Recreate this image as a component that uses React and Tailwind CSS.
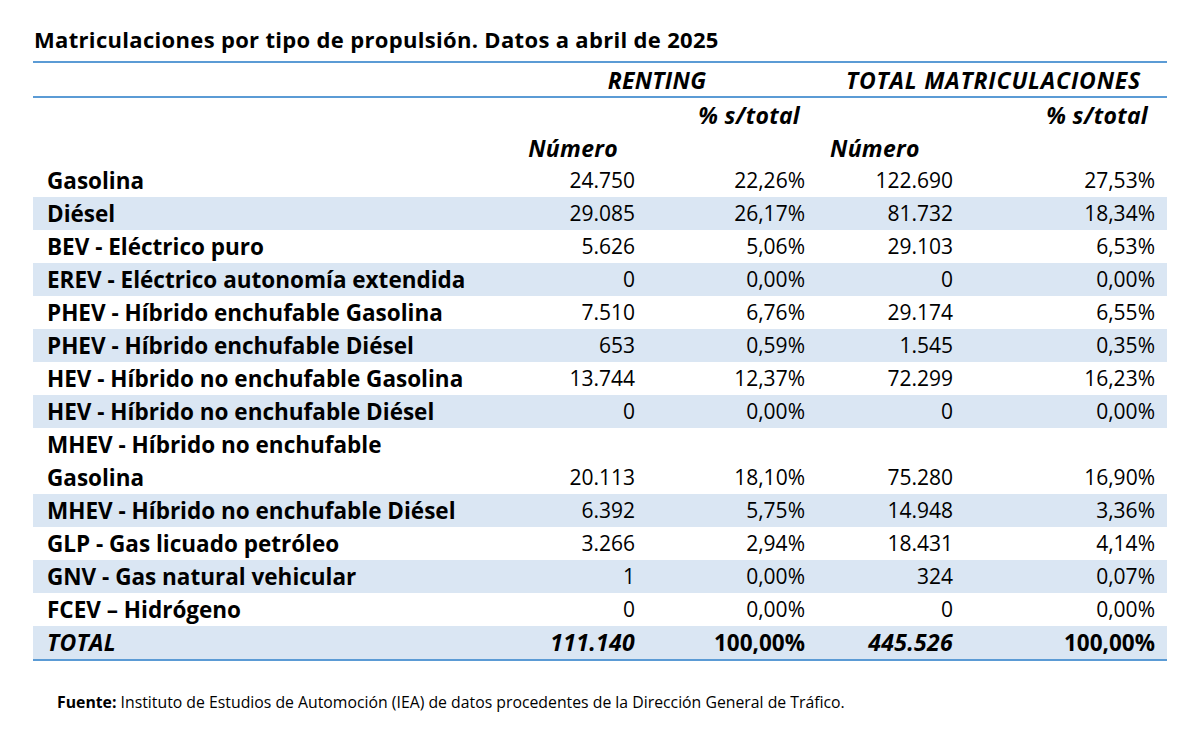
import React from 'react';

const rows = [
  { label: 'Gasolina', r: '24.750', rp: '22,26%', t: '122.690', tp: '27,53%' },
  { label: 'Diésel', r: '29.085', rp: '26,17%', t: '81.732', tp: '18,34%', shade: true },
  { label: 'BEV - Eléctrico puro', r: '5.626', rp: '5,06%', t: '29.103', tp: '6,53%' },
  { label: 'EREV - Eléctrico autonomía extendida', r: '0', rp: '0,00%', t: '0', tp: '0,00%', shade: true },
  { label: 'PHEV - Híbrido enchufable Gasolina', r: '7.510', rp: '6,76%', t: '29.174', tp: '6,55%' },
  { label: 'PHEV - Híbrido enchufable Diésel', r: '653', rp: '0,59%', t: '1.545', tp: '0,35%', shade: true },
  { label: 'HEV - Híbrido no enchufable Gasolina', r: '13.744', rp: '12,37%', t: '72.299', tp: '16,23%' },
  { label: 'HEV - Híbrido no enchufable Diésel', r: '0', rp: '0,00%', t: '0', tp: '0,00%', shade: true },
  { label: 'MHEV - Híbrido no enchufable', label2: 'Gasolina', r: '20.113', rp: '18,10%', t: '75.280', tp: '16,90%' },
  { label: 'MHEV - Híbrido no enchufable Diésel', r: '6.392', rp: '5,75%', t: '14.948', tp: '3,36%', shade: true },
  { label: 'GLP - Gas licuado petróleo', r: '3.266', rp: '2,94%', t: '18.431', tp: '4,14%' },
  { label: 'GNV - Gas natural vehicular', r: '1', rp: '0,00%', t: '324', tp: '0,07%', shade: true },
  { label: 'FCEV – Hidrógeno', r: '0', rp: '0,00%', t: '0', tp: '0,00%' },
];

const cols = 'grid grid-cols-[447px_160px_170px_148px_209px]';

const DataRow = ({ row }) => {
  const tall = !!row.label2;
  return (
    <div className={`${cols} ${row.shade ? 'bg-[#dae6f3]' : ''} ${tall ? 'h-[66px]' : 'h-[33px]'} items-end text-[21px] leading-[33px] text-black`}>
      <div className="pl-[14px] text-[22.5px] font-bold">
        {row.label}
        {tall && <div>{row.label2}</div>}
      </div>
      <div className="pr-[5px] text-right">{row.r}</div>
      <div className="pr-[5px] text-right">{row.rp}</div>
      <div className="pr-[5px] text-right">{row.t}</div>
      <div className="pr-[12px] text-right">{row.tp}</div>
    </div>
  );
};

export default function App() {
  return (
    <div className="w-[1198px] h-[743px] bg-white font-['Open_Sans','Noto_Sans',sans-serif] text-black">
      <div className="pt-[22px] pl-[33px] w-[1167px]">
        <h1 className="text-[22px] font-bold leading-[34px] tracking-[0.32px] pl-[1px]">
          Matriculaciones por tipo de propulsión. Datos a abril de 2025
        </h1>
        <div className="mt-[5px] h-[2px] bg-[#5b9bd5]" />
        <div className={`${cols} h-[33px] items-center text-[23px] font-bold italic tracking-[0.3px]`}>
          <div />
          <div className="col-span-2 pl-[24px] text-center">RENTING</div>
          <div className="col-span-2 pl-[10px] text-center tracking-[0.8px]">TOTAL MATRICULACIONES</div>
        </div>
        <div className="h-[2px] bg-[#5b9bd5]" />
        <div className={`${cols} h-[33px] items-center text-[23px] font-bold italic tracking-[0.3px]`}>
          <div />
          <div />
          <div className="pr-[10px] text-right">% s/total</div>
          <div />
          <div className="pr-[19px] text-right">% s/total</div>
        </div>
        <div className={`${cols} h-[33px] items-center text-[23px] font-bold italic tracking-[0.3px]`}>
          <div />
          <div className="pr-[22px] text-right">Número</div>
          <div />
          <div className="pl-[20px]">Número</div>
          <div />
        </div>
        {rows.map((row) => (
          <DataRow key={row.label + (row.label2 || '')} row={row} />
        ))}
        <div className={`${cols} bg-[#dae6f3] h-[33px] items-end leading-[33px] font-bold`}>
          <div className="pl-[14px] text-[23px] italic tracking-[0.3px]">TOTAL</div>
          <div className="pr-[5px] text-right text-[23px] italic tracking-[0.3px]">111.140</div>
          <div className="pr-[5px] text-right text-[22.5px]">100,00%</div>
          <div className="pr-[5px] text-right text-[23px] italic tracking-[0.3px]">445.526</div>
          <div className="pr-[12px] text-right text-[22.5px]">100,00%</div>
        </div>
        <div className="h-[2px] bg-[#5b9bd5]" />
        <p className="mt-[31px] pl-[24px] text-[15.8px] leading-[20px]">
          <span className="font-bold">Fuente:</span> Instituto de Estudios de Automoción (IEA) de datos procedentes de la Dirección General de Tráfico.
        </p>
      </div>
    </div>
  );
}
